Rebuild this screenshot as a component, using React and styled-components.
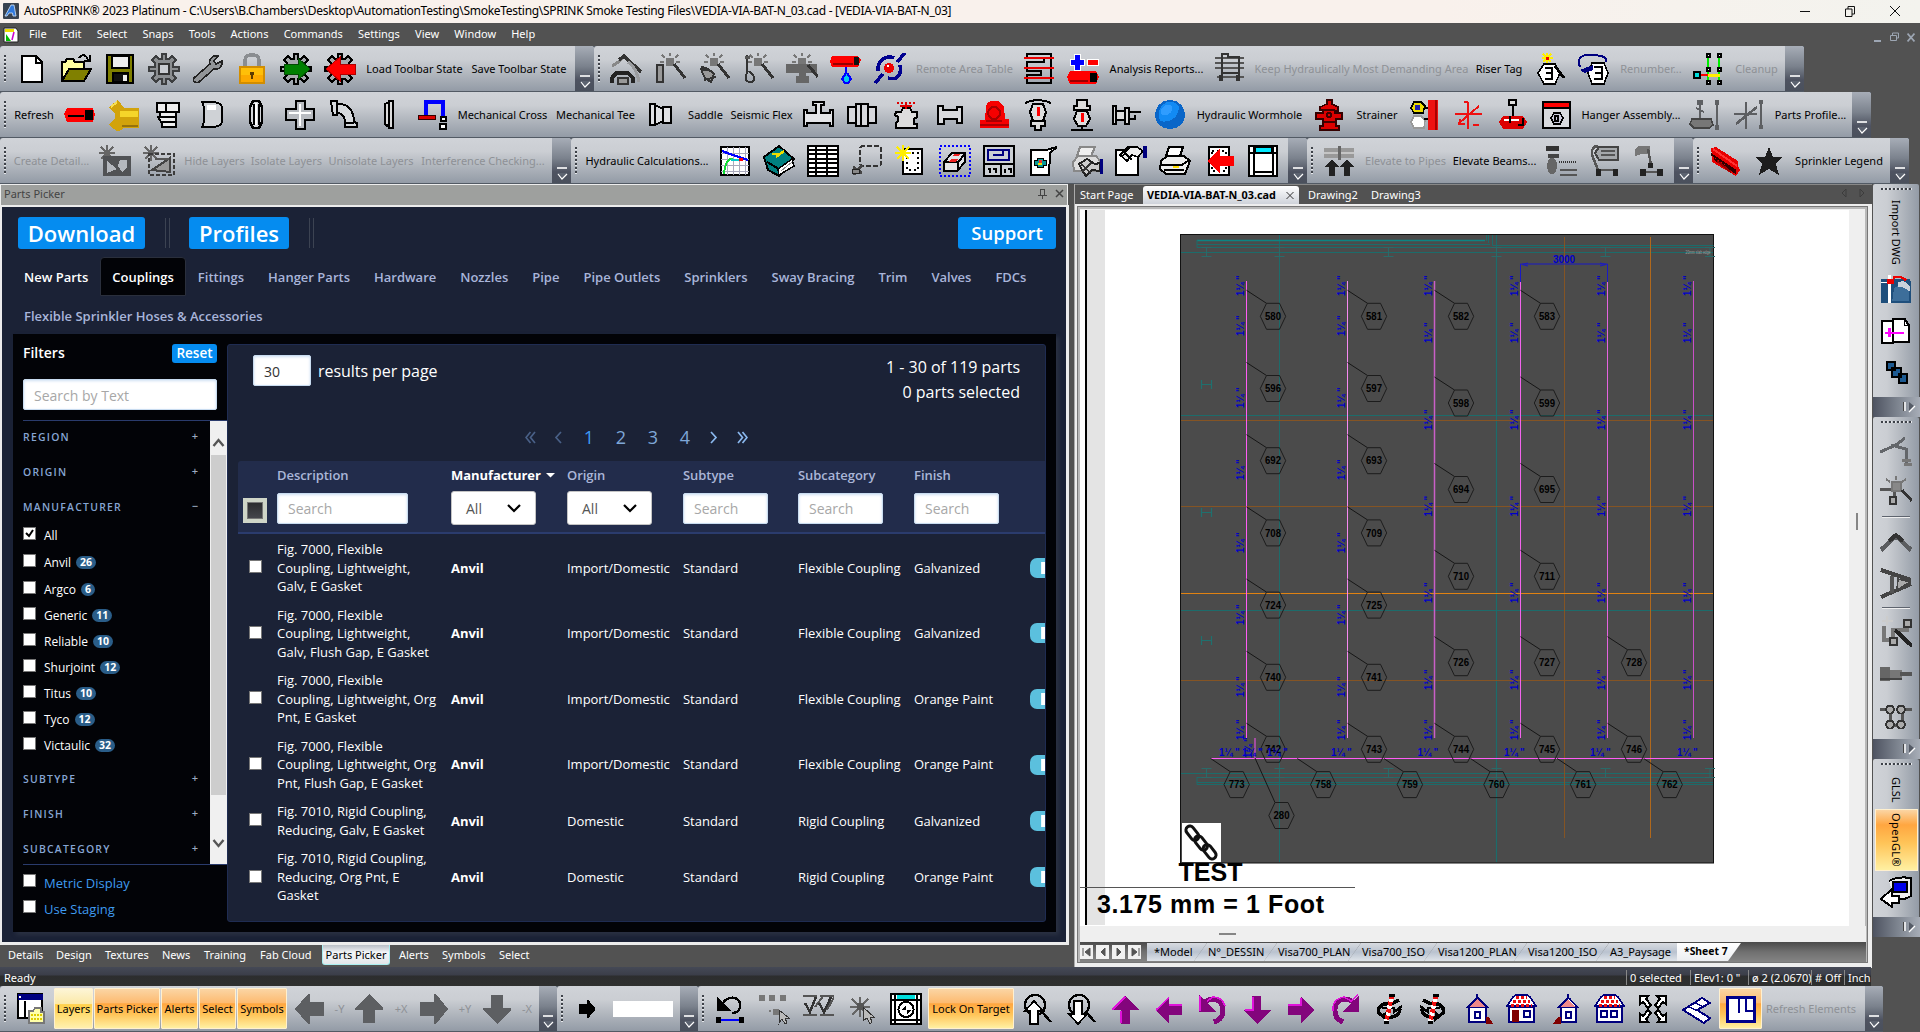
import React from 'react';
import styled, { createGlobalStyle, css } from 'styled-components';

const Global = createGlobalStyle`
  * { box-sizing: border-box; }
  html, body { margin: 0; padding: 0; background: #525252; overflow: hidden; }
  body { font-family: "Noto Sans", "Open Sans", sans-serif; font-size: 11px; color: #000; }
`;

/* ---------- icon data: [path, fill, stroke, strokeWidth, dash] on a 32px grid ---------- */
const K = '#000';
const G = '#5e6063';
const D = '#333';
const N = 'none';
const GEAR = 'M14 1h4v5h3l3-3 4 4-3 3v4h6v4h-6v4l3 3-4 4-3-3h-3v5h-4v-5h-3l-3 3-4-4 3-3v-4H1v-4h6v-4L4 7l4-4 3 3h3z';
const BURST = [['M12 5h8v8h-8z', '#777'], ['M16 0v3M8 2l3 3M24 2l-3 3M6 9h4M22 9h4', N, '#777', 2]];
const WAND = ['M20 11L31 25', N, D, 3];
const GSTAR = ['M8 0v16M0 8h16M2 2l12 12M14 2L2 14', N, '#666', 2];

const ICONS = {
  newFile: [['M6 3h14l6 6v20H6z', '#fff', K, 2], ['M20 3v7h6', N, K, 2]],
  open: [['M2 28V9h3l2-3h6l2 3h9v6', '#ffffa0', K, 2], ['M2 28l7-12h22l-7 12z', '#808000', K, 2], ['M19 5c3-4 7-4 9 2M30 2v6h-6', N, K, 2]],
  save: [['M3 2h26v28H3z', '#808000', K, 2], ['M8 3h17v12H8z', '#eee', K, 1.5], ['M9 20h15v9H9z', '#111', K, 1.5], ['M19 22h4v6h-4z', '#eee']],
  gear: [[GEAR, '#8b8e91', '#3c3e40', 1.6], ['M11 11h10v10H11z', '#c9ccd1', '#333', 2]],
  wrench: [['M2 25l16-14c-2-5 3-9 8-8l-4 5 2 3 6-3c1 6-4 9-8 8L7 29c-3 2-7-1-5-4z', '#929598', '#222', 1.6]],
  lock: [['M9 15V7c0-7 14-7 14 0v8', N, '#8a8d91', 3.5], ['M4 14h24v16H4z', '#ffbf08', '#d28d00', 1.5], ['M5 22h22v7H5z', '#fca900'], ['M14 19h4v3h-1v4h-2v-4h-1z', '#5b3c00']],
  gearGo: [[GEAR, '#a6a9ac', K, 2], ['M4 11h14V5l12 11-12 11v-6H4z', '#008000', '#034a03', 1]],
  gearBack: [[GEAR, '#a6a9ac', K, 2], ['M31 11H16V4L2 16l14 12v-7h15z', '#ff0000', '#b00000', 1]],
  crane: [['M2 13l8-5 4-5', N, '#888', 3], ['M9 7l5-4 17 16', N, D, 3.4], ['M18 9q9 6 11 20', N, '#9a9c9f', 3], ['M2 30v-5l4-5h12l5 5v5', N, '#222', 4], ['M8 25h10v6H8z', '#999', D, 1.6]],
  wandPipe: [...BURST, ['M3 12h6v17H3z', '#999', D, 2], WAND],
  wandBend: [...BURST, ['M4 14l6 2 6 5-3 8-6-4-3-6zM2 16l12 2M6 27l12-3', '#999', D, 2], WAND],
  wandDrop: [...BURST, ['M5 2v18M5 20c-6 11 9 12 7 4-1-3-4-4-5-6', N, D, 2], ['M3 3h5v3H3z', '#555'], WAND],
  wandTee: [...BURST, ['M0 11h31v9H20v3h3v7H10v-7h3v-3H0z', '#666'], ['M22 12l10 12', N, D, 3]],
  pipeDrop: [['M2 3h26l3 4-3 7H2L0 9z', '#f00'], ['M24 4h5v8h-5z', '#111'], ['M3 11h20', N, '#940000', 2], ['M16 14v6l-4 6 3 4h3l3-4-4-6', '#0ce', '#00f', 2]],
  rotatePipe: [['M1 30l8-9M23 9l8-9M4 18C3 6 13 2 20 5M14 25c10 3 14-4 12-13', N, '#000090', 3.5], ['M15 10a5 5 0 1 0 .1 0', '#e00'], ['M13 12h2v2h-2z', '#fff']],
  table: [['M4 1h24v29H4v-8h14v-4H4V9h17V5H4z', N, K, 2], ['M1 5h30M1 15h30M1 25h30', N, '#e90000', 2.3]],
  analysis: [['M7 1h6v5h4v6h-4v5H7v-5H3V6h4z', '#00f', '#fff', 1], ['M20 6h11v6H20z', '#f00', '#fff', 1], ['M3 18h26l3 6-3 7H3l-3-7z', '#f00'], ['M23 20h7v9h-7z', K], ['M3 28h18', N, '#900', 2]],
  ladder: [['M1 5h29M1 10h29M1 15h29M3 24h27', N, '#555', 2], ['M8 28V1h6v3h11v24M8 20h17', N, D, 2.5], ['M5 22h4v6H5zM22 22h4v6h-4z', D]],
  tagNew: [['M11 11h11l5 9-5 11H11l-6-11z', '#fff', K, 1.6], ['M12 15h7v11h-7M13 20h5', N, K, 2.2], ['M14 0v10M9 5h11M10 1l8 8M18 1l-8 8', N, '#fe0', 1.8], ['M13 4h3v3h-3z', '#e00'], ['M22 13l9 12', N, K, 3]],
  tagRenum: [['M15 10h12l4 10-4 11H15l-4-11z', '#fff', K, 1.6], ['M17 14h8v12h-8M18 20h6', N, K, 2.2], ['M3 14C-2 2 10 1 17 2s13 1 12 7', N, '#000080', 2], ['M3 17l13-5v5L8 20z', '#000080']],
  cleanup: [['M15 3v26M26 3v26', N, '#0e0', 2], ['M4 22h12', N, '#f00', 2.5], ['M15 22h12', N, '#fe0', 3], ['M14 1h3v3h-3zM25 1h3v3h-3zM14 15h3v3h-3zM25 15h3v3h-3zM14 28h3v3h-3zM25 28h3v3h-3z', '#fff', K, 1.2], ['M1 19h6v6H1z', '#0dd', K, 1.5]],
  pipe: [['M3 9h26l2 6-2 8H3l-3-8z', '#f00'], ['M21 11h8v10h-8z', K], ['M4 17h16', N, K, 2]],
  yfit: [['M1 8l9-7 6 8h15v20H16l-6 4-9-7 6-7v-4z', '#d2a30b'], ['M12 12h18v6H12z', '#f5d52a'], ['M14 27h16', N, '#96720b', 2], ['M3 8l6-5', N, '#f7df51', 2]],
  cap: [['M5 4h22v9H5zM8 13h16v5H8zM6 18h18v5H9zM10 23h14v5H10z', '#eee', K, 2], ['M14 4v9', N, K, 2]],
  endcap: [['M6 3h12q8 1 8 6v13q0 5-8 6H6l2-5V8z', '#cfd2d6', K, 2], ['M11 6h9v5h-9z', '#fff']],
  coupling: [['M13 2h6l3 6v15l-3 6h-6l-3-6V8z', '#d4d6da', K, 2.4], ['M14 5v21M19 5v21', N, K, 1.5], ['M16 4v22', N, '#fff', 2]],
  cross: [['M12 2h9v8h9v11h-9v9h-9v-9H2V10h10z', '#b9bcc1', K, 2], ['M16 5v22M5 14h22', N, '#fff', 2.4]],
  elbow: [['M3 2h6v3c12-1 17 8 17 18l3 1v4H17v-4C17 18 15 14 9 14v2H5z', '#d7dadd', K, 2], ['M9 5v9M17 24h9', N, K, 1.5]],
  flange: [['M13 5l4-2v25l-4-3zM17 2h4v27h-4z', '#ddd', K, 2.2]],
  uPipe: [['M10 16V3h17v14', N, '#00f', 4], ['M2 16h17v4H2z', '#d00', '#300', 1], ['M25 18h5v4h-5zM24 25h6v5h-6z', '#fff', K, 1.7]],
  saddleA: [['M4 5h5v21H4zM9 6l8 4v12l-8 4zM17 8h8v16h-8z', '#e0e1e4', K, 2]],
  tee: [['M11 3h11v3h-3v8h9v-3h3v16h-3v-3H5v3H2V11h3v3h9V6h-3z', '#e4e5e8', K, 2]],
  sleeve: [['M2 8h8v16H2zM10 5h12v22H10zM22 8h8v16h-8z', '#d7d8dc', K, 2], ['M15 5v22', N, K, 1.4]],
  valveRed: [['M6 13h5l2-4h7l2 4h5v5l-3 2v5h3v4H6v-5l2-2v-4l-3-2z', '#ddd', K, 2], ['M7 4h18', N, '#d00', 2.4, '2 2'], ['M10 7h12', N, '#d00', 2], ['M16 3v7', N, '#d00', 2]],
  nozzle: [['M4 7h5v4h14V8h5v16h-5v-4H10v5H4z', '#d9dadd', K, 2]],
  alarm: [['M9 4l4-2h7l6 5 1 13h4v9H2v-8h5l1-13z', '#f60000'], ['M16 8a6 6 0 1 0 .1 0M2 26h29M8 22h16', N, '#a80000', 2]],
  gaugeA: [['M3 4q13-6 26 0', N, K, 2], ['M11 5h10l3 8-3 9H11L8 13z', '#ddd', K, 2], ['M16 8v9', N, '#f00', 3], ['M9 22h14v5h-4v4h-6v-4H9z', '#ddd', K, 2]],
  gaugeB: [['M11 1h10v6h3v4H8V7h3zM11 12h10l3 8-4 7h-8l-4-7z', '#ddd', K, 2], ['M16 14v9', N, '#f00', 3], ['M5 31h22M16 27v3', N, K, 2]],
  side: [['M3 7h3v18H3zM6 12h9v9H6zM15 9h4v16h-4z', '#ddd', K, 2], ['M19 13h12M19 20h6v-4', N, K, 2]],
  ball: [['M16 1C7 1 1 8 1 16s6 14 15 14 15-6 15-14S25 1 16 1z', '#0a66c8'], ['M13 3C4 6 3 17 6 22c11 3 20-5 19-15-3-4-9-5-12-4z', '#128bf4'], ['M12 6c-5 2-6 7-4 10 7 1 11-3 10-8-1-2-4-3-6-2z', '#2f9dff']],
  hydrant: [['M14 1h5v4l6 3v4h-3v2h7v6h-6v7h3v4H7v-4h3v-7H3v-6h7v-3H7V8l7-3z', '#dd0000', '#350000', 1.5], ['M16 14a2 2 0 1 0 .1 0M10 11h12M11 23h11', N, '#400', 2]],
  riser: [['M19 1h10v30H19z', '#e11'], ['M27 1v30', N, '#a00', 2], ['M5 3h7l4 4-2 7H5L2 9z', '#ed0', K, 1.5], ['M6 6h5v5H6z', '#22a'], ['M5 17h7l4 4-1 8H5l-3-6z', '#fff', '#999', 1.5], ['M15 9h4M15 20h4', N, K, 2]],
  axes: [['M15 3v27M2 15h27M5 25L26 7M7 20v5h5M11 3h4M20 26h6', N, '#e11', 2]],
  hanger: [['M16 6v12', N, K, 2], ['M12 1h7v5h-7z', '#ddd', K, 1.5], ['M6 17h20l4 6-4 7H6l-4-7z', '#d00'], ['M7 21h15', N, '#fff', 2], ['M13 17v7M26 19v7h-5', N, K, 2]],
  cabinet: [['M2 3h27v26H2z', '#d8dade', K, 2], ['M3 4h25v5H3z', '#f00'], ['M2 9h27', N, K, 1.5], ['M13 14h6l3 5-3 6h-6l-3-6z', '#ccd', K, 1.6], ['M14 17h3v5h-3z', N, K, 1.6]],
  brace: [['M11 4v17M28 4v24', N, G, 2.4], ['M8 1h6v5H8zM26 1h4v5h-4zM26 26h4v5h-4z', G], ['M3 20h19l2 6-4 3H5l-4-4z', '#777', '#444', 1.6], ['M7 9l8 4', N, G, 2]],
  brace2: [['M13 3v27M1 15h23M28 2v28M3 25L24 8', N, '#5c5e61', 2.6], ['M26 1h4v4h-4zM26 26h4v4h-4z', G]],
  detail: [GSTAR, ['M4 11h28v20H4z', '#505255'], ['M8 16l10 8-10 4zM21 15h7v7l-5 5-4-6z', '#b4b8be']],
  detail2: [GSTAR, ['M6 9h25v21H6z', N, '#3c3c3c', 2.5, '4 2'], ['M9 25l18-12v14z', '#999', '#444', 2], ['M12 14h14', N, '#555', 2]],
  graph: [['M2 2h28v28H2z', '#fff', K, 2], ['M8 2v28M14 2v28M20 2v28M26 2v28M2 8h28M2 14h28M2 20h28M2 26h28', N, '#aab', 1], ['M3 6l8 3 18 6', N, '#00f', 2.4], ['M5 29c1-9 3-16 9-15', N, '#1d3', 2], ['M12 15h9', N, '#0cc', 2], ['M20 13h4v3h-4z', '#f00']],
  book: [['M1 12L16 1l15 13-15 17L5 25z', '#008080', K, 2], ['M16 30l-1-6 14-10 2 7z', '#fff', K, 1.5], ['M9 9h8l4-3M13 12l8-6', N, '#ed0', 2.3], ['M4 17l12 7', N, K, 2], ['M18 26l11-9', N, '#888', 1]],
  sheet: [['M1 1h30v30H1z', '#fff', K, 2], ['M1 5h30M1 9h30M1 14h30M1 18h30M1 23h30M1 27h30M9 1v30M20 1v30', N, K, 2]],
  area: [['M9 3q1-2 4-2h14q3 0 3 3v14q0 3-3 3H12q-3 0-3-3z', N, '#333', 2, '5 2'], ['M11 20L3 30M2 22l9 6', N, '#444', 3], ['M1 24h7v4H1z', '#888', '#222', 1]],
  newSheet: [['M8 4h19v25H8z', '#fff', K, 2], ['M12 8h11v17H12z', N, K, 2, '2 3'], ['M8 0v16M0 8h16M2 2l12 12M14 2L2 14', N, '#fe0', 2.2]],
  box: [['M1 1h30v30H1z', N, '#00f', 2, '2 2'], ['M5 17l8-9h13v9l-8 9H5z', '#e3e4e6', K, 2], ['M5 17h14l7-8M19 17v9', N, K, 2], ['M9 17l3-3h7l-3 3zM13 11l2-2h7l-3 2z', '#e22']],
  plan: [['M1 1h30v30H1z', '#ccd0d5', K, 2], ['M1 19h30M18 19v12', N, K, 2], ['M5 5h21v10H5zM10 10h10V6', N, '#000080', 2], ['M5 24h2v4M10 24h3v4M22 24v4M25 24h3v4', N, K, 1.5]],
  photo: [['M4 5h15l11-3-7 6-1 22H4z', '#fff', K, 2], ['M10 13h6v2h3v5h-3v2h-6v-2H7v-5h3z', '#0a9898', K, 1], ['M12 15h3v3h-3z', '#e33'], ['M11 19h4', N, '#ed0', 2]],
  printGray: [['M9 2h15l-4 9H6z', '#eee', '#888', 2], ['M2 17l5-6h18l4 5-2 10H3z', '#ddd', '#888', 2], ['M8 19l8-5 8 5 5-1v8l-8-1-6 6-4-6z', '#ccc', '#222', 2], ['M10 19l10 9M20 18l-9 9', N, D, 1.6], ['M30 14v15', N, '#00007d', 3]],
  setup: [['M1 5h22v25H1z', '#fff', K, 2], ['M5 10l8-8h9l6 4-5 6-6-2-5 6z', '#eee', K, 1.8], ['M8 6l9 9M14 3l-7 9', N, K, 1.6], ['M30 1v12', N, '#00007d', 4]],
  print: [['M10 2h14l-4 12H6z', '#fff', K, 2], ['M2 16l6-5h17l6 5-5 13H7l-6-5z', '#eee', K, 2], ['M2 20h21l7-5M5 25h20', N, K, 2], ['M14 22h6', N, '#fd0', 2]],
  book2: [['M6 2h20v28H6z', '#fff', K, 2], ['M9 6h14v20H9z', N, K, 2, '2 3'], ['M31 11H17V3L4 16l13 13v-8h14z', '#f00']],
  window: [['M2 1h28v30H2z', '#fff', K, 2], ['M8 2h16v5H8z', '#00eaff', K, 1], ['M2 8h28M7 1v30M26 1v30M7 27h19', N, K, 1.6], ['M8 9h17v17H8z', '#fff']],
  elevate: [['M1 3h30v10H1z', '#999'], ['M1 8h30', N, '#c5c5c5', 2], ['M16 1v14', N, '#666', 3], ['M9 14l7 8h-4v9H6v-9H2zM24 14l7 8h-4v9h-6v-9h-4z', '#222']],
  layersGray: [['M1 1h13v5H1z', '#333'], ['M3 9h11v4H3z', '#444'], ['M7 13a5 8 0 1 0 .1 0', '#666'], ['M14 17h18', N, '#333', 2, '1 1'], ['M15 25h17M15 30h17', N, '#555', 2.5]],
  pipeGray: [['M10 2h19v13H10L6 8z', '#a5a8ab', '#444', 2], ['M12 6h14M12 10h14', N, '#555', 2], ['M9 1q-7 0-6 9l4 10 2 5h16', N, '#555', 2.5], ['M7 24h5v7H7zM24 24h5v7h-5z', '#222']],
  armGray: [['M5 1h12v8H8l-6 2V4z', '#777'], ['M15 4l3 16M11 27h16', N, '#555', 2.5], ['M15 18h5v5h-5zM7 24h6v7H7zM24 24h6v7h-6z', '#222']],
  beamRed: [['M2 3l5-1 22 14v5l2 4-4 6L3 17v-7z', '#e80000'], ['M2 9l25 17M5 14l22 14', N, '#300', 2], ['M4 4l24 17', N, '#f33', 2], ['M8 16l14 11', N, '#900', 2]],
  star: [['M16 2l4 10h9l-6 7 3 11-10-6-10 6 3-11-6-7h9z', '#1d1d1d']],
  pane: [['M2 1h24v24H2z', '#fff', K, 2], ['M2 1h25v6H2z', '#000080'], ['M9 8v17', N, K, 2], ['M3 3h2v2H3z', '#fff'], ['M13 18h4l2-3h6v4h3v11H13z', '#ffffa8', '#777', 1.5], ['M15 22h11M15 26h11', N, '#dc0', 2, '2 1']],
  aL: [['M1 16L14 1h2v8h14v14H16v8h-2z', '#5d5f62']],
  aU: [['M16 1l14 14v2h-8v13H10V17H2v-2z', '#5d5f62']],
  aR: [['M31 16L19 1h-2v8H3v14h14v8h2z', '#5d5f62']],
  aD: [['M16 31L2 17v-2h8V2h12v13h8v2z', '#5d5f62']],
  aSmall: [['M4 9h12V3h2l10 12v2L18 29h-2v-6H4z', '#000']],
  undo: [['M8 12C12 1 28 3 26 14c-1 5-4 6-8 6', N, K, 2.4], ['M3 4v14h14z', K], ['M4 27h24', N, '#00f', 2.4], ['M2 24h5v6H2zM25 24h5v6h-5z', K]],
  pick: [['M1 2h6v6H1zM11 2h6v6h-6zM22 2h6v6h-6z', '#777'], ['M15 16h6v6h-6zM11 17h2v2h-2z', '#777'], ['M21 17v13l3-4 3 5 2-1-2-5h4z', '#bbb', '#333', 1]],
  checks: [['M1 3h14M18 3h14M1 22h14M18 22h14M13 14L22 2M25 17L32 4', N, '#555', 2], ['M3 10l5 9 6-15M17 10l5 9 7-15', N, '#333', 2.4]],
  sparkPick: [['M14 4v20M4 14h20M6 6l16 16M22 6L6 22', N, '#666', 2.8], ['M11 10h7v7h-7z', '#555'], ['M17 14v14l4-3 3 6 2-2-2-5h4z', '#bbb', '#333', 1]],
  film: [['M1 1h30v30H1z', '#fff', K, 2], ['M7 2h18v4H7z', '#0dd'], ['M1 7h30M1 27h30M5 1v30M27 1v30', N, K, 1.7], ['M16 9a7.500 7.500 0 1 0 .1 0', '#fff', K, 2], ['M16 12v5h-4zM17 17h4l-4 5z', K]],
  zoomIn: [['M14 2a10 10 0 1 0 .1 0M21 19l9 10', N, K, 2.4], ['M13 8l9 10h-5v13H9V18H4z', '#fff', K, 1.8]],
  zoomOut: [['M14 2a10 10 0 1 0 .1 0M21 19l9 10', N, K, 2.4], ['M13 31l9-10h-5V8H9v13H4z', '#fff', K, 1.8]],
  mU: [['M16 3L30 17h-9v14h-9V17H2z', '#83057c'], ['M3 17L16 4M12 18v12', N, '#e012da', 1.5]],
  mL: [['M2 17L16 4v7h13v11H16v8z', '#83057c'], ['M3 17L16 5M16 12h13', N, '#e012da', 1.5]],
  mD: [['M16 31L2 17h9V3h9v14h10z', '#83057c'], ['M12 4v13H4', N, '#e012da', 1.5]],
  mR: [['M30 17L16 4v7H3v11h13v8z', '#83057c'], ['M3 12h13V5', N, '#e012da', 1.5]],
  mUndo: [['M8 9c8-6 18-2 18 9 0 5-3 9-9 11', N, '#83057c', 5], ['M2 2v17h17z', '#83057c'], ['M3 3v15M10 8l6-4q9 0 12 9', N, '#e012da', 1.5]],
  mRedo: [['M24 9C16 3 5 7 6 18c0 5 3 9 8 11', N, '#83057c', 5], ['M30 2v17H13z', '#83057c'], ['M4 18q-1-12 11-14l7 4 7-6', N, '#e012da', 1.5]],
  rotA: [['M26 7q-8 5-15 4-7 3-5 9 8 7 16 3 5-2 5-7', N, K, 3.4], ['M9 15h12v4l8-6', N, K, 2.4], ['M14 18l-7 5 8 6z', K], ['M19 2L13 30', N, '#fff', 4.5], ['M19 2L13 30', N, '#e11', 4.5, '4 3'], ['M16 1h6v3h-6zM11 28h5v3h-5z', K]],
  rotB: [['M6 7q8 5 15 4 7 3 5 9-8 7-16 3-5-2-5-7', N, K, 3.4], ['M23 15H11v4l-8-6', N, K, 2.4], ['M18 18l7 5-8 6z', K], ['M19 2L13 30', N, '#fff', 4.5], ['M19 2L13 30', N, '#e11', 4.5, '4 3'], ['M16 1h6v3h-6zM11 28h5v3h-5z', K]],
  houseA: [['M8 14h17v15H8z', '#fff', '#00007d', 2.2], ['M16 1v4L7 14h19L17 5', '#fff', '#00007d', 1.6], ['M16 6l-7 8h15z', '#e88'], ['M14 19h5v6h-5z', N, '#00007d', 1.8], ['M25 24h3l4 7h-7z', '#800000']],
  houseB: [['M4 14h25v15H4z', '#fff', '#00007d', 2.2], ['M2 13l6-9 3-2h11l3 2 6 9z', '#fff', '#00007d', 1.5], ['M6 12h21M8 8h17M11 4h11', N, '#e11', 3, '3 2'], ['M7 17h7v12H7z', '#800000'], ['M19 18h6v6h-6z', N, '#00007d', 1.8]],
  houseC: [['M12 14h15v15H12z', '#fff', '#00007d', 2.2], ['M19 1v4l-9 9h18L20 5', '#fff', '#00007d', 1.6], ['M19 6l-7 8h14z', '#e88'], ['M17 19h5v6h-5z', N, '#00007d', 1.8], ['M12 24H9l-5 7h8z', '#800000']],
  houseD: [['M4 14h25v15H4z', '#fff', '#00007d', 2.2], ['M2 13l6-9 3-2h11l3 2 6 9z', '#fff', '#00007d', 1.5], ['M6 12h21M8 8h17M11 4h11', N, '#e11', 3, '3 2'], ['M8 18h6v6H8zM18 18h6v6h-6z', N, '#00007d', 1.8]],
  expand: [['M3 3h8l-2 3 5 6-3 3-5-6-3 2zM29 3v8l-3-2-5 6-3-3 5-6-3-3zM3 29v-8l3 2 5-6 3 3-5 6 2 3zM29 29h-8l2-3-5-6 3-3 5 6 3-2z', '#fff', K, 2]],
  wedge: [['M2 17L21 5l8 5-13 7 13 8-6 5z', '#fff', '#00007d', 2], ['M8 14l7 3M14 10l7 3', N, '#00007d', 1.4]],
  planBlue: [['M2 4h28v25H2z', '#fff', '#00008a', 3], ['M14 5v15M21 5v13h8', N, '#00008a', 2.5]],
  dwg: [['M0 5h30l2 3v23H0z', '#1f4f7c'], ['M14 15q8-5 16 1v13H12z', '#3d6e9a'], ['M9 1v30', N, '#fff', 3], ['M0 9h14', N, '#fff', 2], ['M6 5h8v6H6z', '#e00'], ['M13 4q8-3 14 3', N, '#e00', 2.5], ['M18 9q8-4 13 5v5q-7-6-13-5z', '#cbd2dc']],
  compare: [['M1 5h12v24H1z', '#fff', K, 2.4], ['M13 3h12l5 7v18H13z', '#fff', K, 2.4], ['M25 3v7h5', N, K, 1.6], ['M4 18h20M9 13v9', N, '#f0f', 2.3]],
  blocks: [['M6 4h9v9H6zM12 11h9v9h-9zM19 17h9v10h-9z', '#1d5a91', K, 2]],
  sideA: [['M0 18L16 11 25 4M11 11l15 4v14', N, '#63666a', 3], ['M22 26h9M24 30h8', N, '#777', 3]],
  sideB: [['M0 13h14v9', N, '#555', 3], ['M12 6h9v9h-9zM16 0v4M6 3l4 3M26 3l-4 3', '#888', '#777', 2], ['M10 21h6v7h-6z', '#aaa', '#333', 2], ['M22 14l10 11', N, D, 3]],
  sideC: [['M1 25L16 11l15 14', N, '#5b5d60', 4.5], ['M9 16l7-6 7 6', N, D, 4]],
  sideD: [['M1 3l30 10M31 17L1 30', N, '#444', 4], ['M12 9v17', N, '#555', 4], ['M18 12l12 3-13 8z', '#aaa', '#444', 1.6]],
  sideE: [['M4 10v14h9M13 24V14h14V8', N, '#777', 3.4], ['M7 0v9M2 5h11', N, '#ccc', 2], ['M15 14l17 16', N, '#222', 4], ['M24 4h7v7h-7zM10 22h7v7h-7z', '#aaa', D, 1.5]],
  sideF: [['M0 9h10v14H0z', '#666'], ['M10 12h12v8H10z', '#777'], ['M0 21h22', N, '#444', 2], ['M20 16h12', N, '#555', 4]],
  sideG: [['M0 9h10M22 9h10M10 10v14M22 10v14M8 25h16', N, '#555', 3], ['M8 6a4 4 0 1 0 4 0zM19 6a4 4 0 1 0 4 0zM8 21a4 4 0 1 0 4 0zM19 21a4 4 0 1 0 4 0z', '#aaa', D, 1.7]],
  monitor: [['M9 5q8-5 22-3v18q-8 5-16 3', '#eee', K, 2], ['M13 6h14v10H13z', '#0000e8', K, 1.5], ['M12 13v7h7v7h-7v4L1 23z', '#fff', K, 2]],
};

const Svg = styled.svg`display: block; flex: none;`;
const Icon = ({ name, size = 32 }) => (
  <Svg width={size} height={size} viewBox="0 0 32 32">
    {ICONS[name].map(([d, f, s, w, dash], i) => (
      <path key={i} d={d} fill={f} stroke={s || 'none'} strokeWidth={w || 0} strokeDasharray={dash} shapeRendering="crispEdges" />
    ))}
  </Svg>
);

/* ---------- frame ---------- */
const Frame = styled.div`
  width: 1920px; height: 1032px; display: flex; flex-direction: column;
  background: #525252; overflow: hidden; white-space: nowrap;
`;
const TitleBar = styled.header`
  height: 23px; flex: none; display: flex; align-items: center; padding: 0 20px 1px 3px;
  background: linear-gradient(90deg, #f9f1ec 0 75%, #f3f3ee);
`;
const TitleText = styled.h1`
  margin: 0 auto 0 5px; font: 400 12px/22px "Noto Sans", sans-serif; letter-spacing: -0.28px;
`;
const WinButtons = styled.div`display: flex; align-items: center; gap: ${p => p.$gap}px;`;
const MenuBar = styled.nav`
  height: 23px; flex: none; display: flex; align-items: center; padding: 0 5px 0 3px;
  background: #525252; color: #fff;
`;
const MenuItem = styled.span`margin-left: ${p => (p.$first ? 10 : 15.2)}px; line-height: 20px; height: 22px;`;
const Spacer = styled.div`flex: 1;`;

/* ---------- toolbars ---------- */
const Row = styled.div`height: 46px; flex: none; display: flex; background: #525a64; padding-bottom: 1px; width: fit-content;`;
const Bar = styled.div`
  display: flex; align-items: stretch; height: 45px; width: ${p => p.$w}px; border-radius: 3px 3px 0 0;
  background: linear-gradient(#d0d3d8 0, #cbced3 30%, #b4b9c0 58%, #939ba6 100%);
`;
const Grip = styled.i`
  width: 2px; height: 27px; margin: 9px 4px 0 4px; flex: none;
  background: repeating-linear-gradient(#3d4148 0 2px, #e6e8eb 2px 3px, transparent 3px 4px);
`;
const Slot = styled.div`
  width: ${p => p.$w}px; flex: none; display: flex; align-items: center; justify-content: center;
  color: ${p => (p.$off ? '#8e9196' : '#000')};
`;
const Cap = styled.div`
  width: ${p => p.$w || 19}px; flex: none; height: 45px; margin-left: auto; display: flex; align-items: flex-end; justify-content: center;
  background: linear-gradient(#a7adb7, #7b828d 45%, #4e5361 75%, #4a505c); border-radius: 0 3px 0 0;
`;
const CapMark = () => (
  <Svg width="12" height="17" viewBox="0 0 12 17">
    <path d="M1 2h10" stroke="#fff" strokeWidth="1.6" />
    <path d="M1 7h10L6 13z" fill="#5c6370" /><path d="M2 8l4 5 5-5" fill="none" stroke="#fff" strokeWidth="1.2" />
  </Svg>
);
const HotButton = styled.div`
  width: ${p => p.$w}px; height: 41px; align-self: center; flex: none; display: flex; align-items: center; justify-content: center;
  margin-right: 1px; border: 1px solid #fff0cf; border-radius: 1px;
  background: ${p => (p.$pale
    ? 'linear-gradient(#fdf5d6, #fbe9a9 38%, #ffd04a 40%, #fff0ae)'
    : 'linear-gradient(#fbd5a4, #fdbb71 35%, #ffa640 38%, #ffc458 65%, #fff0a2)')};
`;
const TextBox = styled.div`width: 60px; height: 16px; background: #fff; align-self: center; margin: 0 3px 0 7px;`;

// item forms: 'icon' (44px) | [text, width, disabled?] | {hot, w, pale} | {icon, w} | {box}
const Items = ({ items }) => items.map((it, i) => {
  if (typeof it === 'string') return <Slot key={i} $w={44}><Icon name={it} /></Slot>;
  if (Array.isArray(it)) return <Slot key={i} $w={it[1]} $off={it[2]}>{it[0]}</Slot>;
  if (it.box) return <TextBox key={i} />;
  if (it.hot) return <HotButton key={i} $w={it.w} $pale={it.pale}>{ICONS[it.hot] ? <Icon name={it.hot} size={30} /> : it.hot}</HotButton>;
  return <Slot key={i} $w={it.w}><Icon name={it.icon} size={it.size} /></Slot>;
});
const ToolBar = ({ w, cap, items }) => (
  <Bar $w={w}><Grip /><Items items={items} /><Cap $w={cap}><CapMark /></Cap></Bar>
);

const row1 = [
  { w: 594, items: ['newFile', 'open', 'save', 'gear', 'wrench', 'lock', 'gearGo', 'gearBack', ['Load Toolbar State', 105], ['Save Toolbar State', 104]] },
  { w: 1210, items: ['crane', 'wandPipe', 'wandBend', 'wandDrop', 'wandTee', 'pipeDrop', 'rotatePipe', ['Remote Area Table', 105, 1], 'table', 'analysis', ['Analysis Reports...', 103], 'ladder', ['Keep Hydraulically Most Demanding Area', 219, 1], ['Riser Tag', 56], 'tagNew', 'tagRenum', ['Renumber...', 72, 1], 'cleanup', ['Cleanup', 51, 1]] },
];
const row2 = [
  { w: 1871, items: [['Refresh', 48], 'pipe', 'yfit', 'cap', 'endcap', 'coupling', 'cross', 'elbow', 'flange', 'uPipe', ['Mechanical Cross', 97], ['Mechanical Tee', 89], 'saddleA', ['Saddle', 43], ['Seismic Flex', 69], 'tee', 'sleeve', 'valveRed', 'nozzle', 'alarm', 'gaugeA', 'gaugeB', 'side', 'ball', ['Hydraulic Wormhole', 115], 'hydrant', ['Strainer', 52], 'riser', 'axes', 'hanger', 'cabinet', ['Hanger Assembly...', 104], 'brace', 'brace2', ['Parts Profile...', 79]] },
];
const row3 = [
  { w: 571, items: [['Create Detail...', 83, 1], 'detail', 'detail2', ['Hide Layers', 67, 1], ['Isolate Layers', 77, 1], ['Unisolate Layers', 92, 1], ['Interference Checking...', 132, 1]] },
  { w: 736, items: [['Hydraulic Calculations...', 132], 'graph', 'book', 'sheet', 'area', 'newSheet', 'box', 'plan', 'photo', 'printGray', 'setup', 'print', 'book2', 'window'] },
  { w: 386, items: ['elevate', ['Elevate to Pipes', 89, 1], ['Elevate Beams...', 89], 'layersGray', 'pipeGray', 'armGray'] },
  { w: 216, items: ['beamRed', 'star', ['Sprinkler Legend', 96]] },
];
const bottomRow = [
  { w: 557, cap: 18, items: ['pane', { hot: 'Layers', w: 39, pale: 1 }, { hot: 'Parts Picker', w: 66 }, { hot: 'Alerts', w: 37 }, { hot: 'Select', w: 37 }, { hot: 'Symbols', w: 50 }, 'aL', ['-Y', 15, 1], 'aU', ['+X', 20, 1], 'aR', ['+Y', 20, 1], 'aD', ['-X', 16, 1]] },
  { w: 141, cap: 18, items: [{ icon: 'aSmall', w: 39, size: 22 }, { box: 1 }] },
  { w: 1185, cap: 18, items: ['undo', 'pick', 'checks', 'sparkPick', 'film', { hot: 'Lock On Target', w: 86 }, 'zoomIn', 'zoomOut', 'mU', 'mL', 'mUndo', 'mD', 'mR', 'mRedo', 'rotA', 'rotB', 'houseA', 'houseB', 'houseC', 'houseD', 'expand', 'wedge', { hot: 'planBlue', w: 43 }, ['Refresh Elements', 96, 1]] },
];

/* ---------- main split ---------- */
const Main = styled.main`height: 783px; flex: none; display: flex;`;
const PickerPane = styled.section`width: 1069px; flex: none; display: flex; flex-direction: column;`;
const PaneTitle = styled.div`
  height: 21px; margin-right: 1px; display: flex; align-items: center; gap: 8px; padding: 0 3px 3px 3px;
  border: 1px solid #eee; border-bottom: 0; background: #9ea09e; color: #444;
`;
const Web = styled.div`
  height: 740px; border: solid #ececec; border-width: 2px 3px 3px 2px; background: #1b2236; color: #fff;
  font-family: "Open Sans", "Noto Sans", sans-serif; padding: 10px 10px 0 11px; display: flex; flex-direction: column;
  white-space: nowrap; overflow: hidden;
`;
const TopActions = styled.div`display: flex; height: 32px; padding-left: 5px; flex: none;`;
const Blue = styled.button`
  border: 0; border-radius: 3px; background: #058cf0; color: #fff; padding: 0; font-family: inherit; font-weight: 600;
  width: ${p => p.$w}px; height: ${p => p.$h}px; font-size: ${p => p.$fs}px; line-height: ${p => p.$h}px; margin-left: ${p => p.$ml || 0};
`;
const Bars = styled.i`width: 5px; height: 30px; margin: 1px 19px 0 20px; border: solid #3c4352; border-width: 0 1px;`;
const Tabs = styled.div`display: flex; flex-wrap: wrap; margin-top: 8px; height: 78px; flex: none;`;
const Tab = styled.span`
  height: 39px; line-height: 39px; padding: 0 11px; border: 1px solid transparent; font-size: 13px; font-weight: 600;
  color: ${p => (p.$on ? '#fff' : '#a9b5da')};
  &:first-child, &:last-child { padding-left: 10px; }
  ${p => p.$active && css`background: #020307; border-color: #2a2f3c; border-radius: 4px 4px 0 0;`}
`;
const Panel = styled.div`
  margin: -1px 0 0 0; width: 1043px; height: 598px; background: #020307; display: flex; padding: 10px;
  box-shadow: 3px 3px 4px #2a3142;
`;
const Filters = styled.aside`width: 204px; flex: none; display: flex; flex-direction: column;`;
const FilterHead = styled.div`display: flex; justify-content: space-between; height: 35px; padding-right: 10px; font-size: 14px; font-weight: 600; line-height: 18px;`;
const Field = styled.div`
  height: 31px; width: ${p => p.$w}px; background: #fff; border: 1px solid #c9dcf0; border-radius: 2px; padding-left: 10px;
  color: ${p => p.$c || '#a7a7a7'}; font-size: 14px; line-height: ${p => p.$lh || 29}px; box-shadow: inset 0 1px 3px #cfe0f3; flex: none;
`;
const ListWrap = styled.div`margin-top: 10px; height: 445px; border: solid #2a3b6c; border-width: 1px 0; display: flex; flex: none;`;
const List = styled.div`width: 187px; overflow: hidden;`;
const Group = styled.div`
  height: 35px; padding: 0 12px 0 0; display: flex; justify-content: space-between; align-items: center; margin-top: ${p => p.$mt || 0}px;
  font-size: 10.4px; font-weight: 600; letter-spacing: 1.25px; color: #86a5d3;
  span:last-child { color: #9aaac0; letter-spacing: 0; font-size: 11px; padding-bottom: 4px; }
`;
const Check = styled.i`
  width: 13px; height: 13px; flex: none; background: #fff; border: 1px solid #777; display: inline-flex; align-items: center; justify-content: center;
`;
const Opt = styled.div`
  height: 26.15px; display: flex; align-items: center; font-size: ${p => p.$fs || 12}px; color: ${p => p.$c || '#fff'};
  margin: ${p => (p.$first ? '-2px 0 1px' : 0)};
  ${Check} { margin: -4px 8px 0 0; }
`;
const Links = styled.div`margin-top: 5px;`;
const Count = styled.b`margin-left: 5px; height: 13px; padding: 0 4px; border-radius: 7px; background: #2a5d88; font-size: 10.5px; line-height: 13px;`;
const Scroll = styled.div`width: 17px; background: #f0f0f0; display: flex; flex-direction: column; align-items: center;`;
const Thumb = styled.i`width: 15px; height: 340px; background: #cdcdcd; margin-top: 8px;`;
const Card = styled.div`
  width: 819px; height: 578px; flex: none; border: 1px solid #1f2c52; border-radius: 3px; background: #1b2236;
  display: flex; flex-direction: column; padding-left: 10px; overflow: hidden;
`;
const Summary = styled.div`height: 73px; display: flex; padding: 10px 25px 0 15px; font-size: 16px; flex: none;`;
const PerPage = styled.span`line-height: 33px; margin: 0 auto 0 7px; letter-spacing: -0.05px;`;
const Totals = styled.div`line-height: 25px; text-align: right; letter-spacing: -0.02px;`;
const Pager = styled.div`height: 43px; padding-left: 278px; display: flex; align-items: center; font-size: 18px; flex: none;`;
const PageNo = styled.span`
  width: ${p => p.$w || 32}px; color: ${p => p.$c || '#7fa7d8'}; height: 27px; line-height: 21px; display: flex; justify-content: center; align-items: center;
  padding-bottom: 5px;
`;
const cols = css`display: grid; grid-template-columns: 39px 174px 116px 116px 115px 116px 116px 16px;`;
const THead = styled.div`
  ${cols} height: 73px; flex: none; background: #222c4b; border-bottom: 2px solid #2b3c6e; border-radius: 3px 0 0 0; margin-bottom: 1px;
  font-size: 13px; font-weight: 600; color: #aab6d8; align-content: start;
`;
const TH = styled.div`display: flex; flex-direction: column; padding-top: 5px; color: ${p => (p.$on ? '#fff' : 'inherit')}; font-weight: ${p => (p.$on ? 700 : 600)};
  ${Field} { margin-top: 9px; font-weight: 400; } `;
const THLabel = styled.div`display: flex; align-items: center; gap: 5px; height: 18px; line-height: 18px; letter-spacing: -0.05px;`;
const SelectBox = styled.div`
  width: 85px; height: 34px; margin-top: 7px; background: #fff; border: 1px solid #c4c4c4; border-radius: 3px; display: flex; align-items: center;
  justify-content: space-between; padding: 0 14px; color: #555; font-size: 14px; font-weight: 400;
`;
const BigCheck = styled.i`
  width: 24px; height: 25px; margin: 37px 0 0 5px; border: 4px solid #cfd5c8; background: linear-gradient(#2b2b2e, #46474d); box-shadow: inset 0 0 0 1px #777;
`;
const TR = styled.div`${cols} height: ${p => (p.$lines === 2 ? 47 : 65.6)}px; flex: none; align-items: center; font-size: 13px; letter-spacing: -0.02px; line-height: 18.57px; ${Check} { margin: -2px 0 0 11px; }`;
const Desc = styled.span`white-space: pre-line; line-height: 18.57px;`;
const Info = styled.i`
  height: 20px; width: 40px; background: #5bc0de; border-radius: 7px; display: flex; align-items: center; padding-left: 11px;
  &::before { content: ''; width: 12px; height: 12px; background: #fff; border-left: 1px solid #e8fbff; }
`;

const BottomTabs = styled.div`height: 22px; display: flex; padding-left: 8px; color: #fff; line-height: 20px;`;
const BTab = styled.span`
  width: ${p => p.$w}px; flex: none; height: 20px;
  ${p => p.$active && css`background: linear-gradient(#b9bec6, #f4f6f8 40%, #e2e5e9); color: #000; text-align: center; border: 1px solid #a9eef0; border-top: 0; border-radius: 0 0 3px 3px; margin: 0 9px 0 -5px; `}
`;

/* ---------- document ---------- */
const DocPane = styled.section`width: 798px; margin-left: 5px; flex: none; display: flex; flex-direction: column; border-left: 1px solid #aaa; `;
const DocTabs = styled.div`height: 20px; display: flex; color: #fff; padding-left: 5px; line-height: 21px; border-top: 1px solid #888; background: #525252; align-items: flex-end;`;
const DocTab = styled.span`
  height: 20px; width: ${p => p.$w}px; flex: none;
  ${p => p.$active && css`display: flex; justify-content: space-between; padding: 0 5px 0 4px; margin: 0 9px 0 0; height: 18px; line-height: 18px; background: linear-gradient(#fff, #e6e8ec 50%, #cfd3da); color: #000; font-weight: 700; font-size: 10.8px; border-radius: 3px 3px 0 0;`}
`;
const DocBody = styled.div`
  flex: 1; border: solid #eee; border-width: 2px 4px 5px 2px; box-shadow: inset 0 0 0 1px #777, inset 0 0 0 3px #b9b9b9; padding: 4px 2px 1px 3px;
  background: #efefef; display: flex; flex-direction: column;
`;
const CanvasRow = styled.div`height: 716px; display: flex;`;
const VScroll = styled.div`width: 16px; display: flex; align-items: center; justify-content: center; background: #efefef; i { width: 2px; height: 17px; background: #858585; margin-top: -94px; }`;
const HScroll = styled.div`height: 16px; display: flex; align-items: center; background: #efefef; i { width: 17px; height: 2px; background: #858585; margin-left: 139px; }`;
const Sheets = styled.div`height: 20px; display: flex; align-items: center; background: linear-gradient(#4a4a4a, #707070 50%, #848484); `;
const NavBtn = styled.i`width: 13px; height: 14px; margin-right: 3px; background: #f1f1f1; display: flex; align-items: center; justify-content: center;`;
const SheetList = styled.div`display: flex; margin-left: 3px;`;
const Sheet = styled.span`
  height: 18px; flex: none; width: ${p => p.$w}px; padding-left: ${p => (p.$first || p.$active ? 7 : 14)}px; line-height: 17px;
  margin-left: ${p => (p.$first ? 0 : p.$active ? -5 : -13)}px;
  background: ${p => (p.$active ? 'linear-gradient(#fff, #eceef1)' : 'linear-gradient(#d8dbe0, #b9c2cf 50%, #dfe4ea)')};
  clip-path: polygon(${p => (p.$active || p.$first ? '0' : '13px')} 0, 100% 0, calc(100% - ${p => (p.$last ? 5 : 13)}px) 100%, 0 100%);
  font-weight: ${p => (p.$active ? 700 : 400)}; font-size: ${p => (p.$active ? 10.4 : 11)}px;
`;

/* ---------- side column ---------- */
const Side = styled.aside`width: 47px; margin-left: 1px; display: flex; flex-direction: column;`;
const VBar = styled.div`
  width: 46px; height: ${p => p.$h}px; flex: none; display: flex; flex-direction: column; align-items: center; border-radius: 2px;
  background: linear-gradient(90deg, #d0d3d8 0, #cbced3 30%, #b4b9c0 60%, #939ba6);
`;
const VGrip = styled.i`width: 31px; height: 2px; margin: 4px 0 6px; flex: none; background: repeating-linear-gradient(90deg, #3d4148 0 2px, #e6e8eb 2px 3px, transparent 3px 4px);`;
const VSlot = styled.div`height: ${p => p.$h || 42}px; flex: none; display: flex; align-items: center; justify-content: center;`;
const VText = styled.div`writing-mode: vertical-rl; height: ${p => p.$h}px; flex: none; text-align: center; line-height: 16px;`;
const VHot = styled.div`
  writing-mode: vertical-rl; width: 43px; height: 62px; flex: none; display: flex; align-items: center; justify-content: center; border: 1px solid #fff0cf;
  background: linear-gradient(#fbd5a4, #ffa640 25%, #ffc458 55%, #fff0a2); letter-spacing: 0.4px; text-orientation: sideways;
`;
const VLine = styled.i`width: 28px; height: 1px; margin: 3px 0; background: #5e646e; box-shadow: 0 1px #eee; flex: none;`;
const VCap = styled.div`
  margin-top: auto; width: 47px; height: 20px; display: flex; align-items: center; justify-content: flex-end; padding-right: 3px;
  background: linear-gradient(90deg, #4e5361, #7b828d 50%, #a7adb7);
`;
const VMark = () => (
  <VCap><Svg width="15" height="12" viewBox="0 0 15 12"><path d="M3 1v9" stroke="#fff" strokeWidth="1.5" /><path d="M1.5 1v9" stroke="#444" strokeWidth="1" /><path d="M7 1v9l5-5z" fill="#555b66" /><path d="M7 11l6-6" stroke="#fff" strokeWidth="1.2" /></Svg></VCap>
);

const Status = styled.footer`
  width: 1871px; height: 19px; flex: none; display: flex; align-items: center; color: #fff; padding: 1px 0 0 4px;
  background: linear-gradient(#454956, #3b3e49 8px, #2c2d2e 9px, #2f302f);
`;
const Cell = styled.span`height: 15px; line-height: 15px; width: ${p => p.$w}px; padding-left: 3px; margin-left: ${p => p.$ml || 0}px; border-left: 1px solid #888; flex: none;`;

/* ---------- drawing ---------- */
const PIPES = [1246.5, 1347.5, 1434.5, 1520.5, 1607.5, 1693.5];
const A = [316.3, 388.5, 460.7, 532.9, 605.1, 677.3, 749.3];
const B = [316.3, 403, 489.5, 576.3, 662.7, 749.3];
const TAGS = [
  [A, [580, 596, 692, 708, 724, 740, 742]], [A, [581, 597, 693, 709, 725, 741, 743]],
  [B, [582, 598, 694, 710, 726, 744]], [B, [583, 599, 695, 711, 727, 745]], [B.slice(4), [728, 746]],
];
const LY_A = [286, 326, 398, 470, 543, 615, 687, 730];
const LY_B = [286, 333, 420, 506.5, 593, 680, 730];

const Tag = ({ x, y, n, from }) => (
  <g>
    <path d={`M${from[0]} ${from[1]}L${x - 6.5} ${y - 13}`} stroke="#161616" fill="none" />
    <path d={`M${x - 6.5} ${y - 13}h13l6.2 13l-6.2 13h-13l-6.2-13z`} stroke="#1c1c1c" fill="none" />
    <text x={x} y={y + 3.7} fontSize="10" textAnchor="middle" fill="#000" fontWeight="700" textLength="16" lengthAdjust="spacingAndGlyphs">{n}</text>
  </g>
);
const Size = ({ x, y, flat }) => (
  <g transform={`translate(${x} ${y})${flat ? '' : ' rotate(-90)'}`} fill="#0000c8" fontSize="10" fontWeight="700">
    <text x="-10" y="0" textLength="13.500" lengthAdjust="spacingAndGlyphs">1¼</text>
    <text x="6" y="0">"</text>
  </g>
);
const IBeam = ({ x, y }) => <path d={`M${x - 5} ${y - 4.5}h10M${x} ${y - 4.5}v9M${x - 5} ${y + 4.5}h10`} stroke="#2a6a69" fill="none" />;
const HBeam = ({ x, y }) => <path d={`M${x - 5} ${y - 4.5}v9M${x - 5} ${y}h10M${x + 5} ${y - 4.5}v9`} stroke="#1f706e" strokeWidth="1.2" fill="none" />;

const Drawing = () => (
  <Svg width="769" height="716" viewBox="1080 210 769 716" fontFamily='"Liberation Sans", sans-serif'>
    <rect x="1080" y="210" width="769" height="716" fill="#fff" />
    <rect x="1087" y="210" width="18" height="715" fill="#e4e4e4" />
    <rect x="1085" y="210" width="2" height="715" fill="#000" />
    <rect x="1180.5" y="234.5" width="533" height="628.5" fill="#4b4b4b" stroke="#111" />
    <g stroke="#1c6c6b" fill="none">
      <path d="M1279.5 235v627M1181 252.5h532M1181 415.5h532M1181 610.5h532M1181 773.5h532" />
      <path d="M1496.5 235v627" strokeWidth="1.2" />
      <path d="M1197 240.5h288" stroke="#0d8482" strokeWidth="1.5" />
      <path d="M1197 240v7.5h516M1197 244.5h293M1486.500 235v6M1488.500 235v8M1492.500 235v10.500h221" />
      <path d="M1197 777.5h516M1197 777v7.500M1197 782.500h516M1197 784.500h516" strokeWidth="1" />
    </g>
    {[1206.5, 1279.5, 1388.5, 1496.5, 1605.5, 1710].map(x => <g key={x}><IBeam x={x} y={252} /><IBeam x={x} y={773} /></g>)}
    {[384.5, 512.5, 640.5].map(y => <HBeam key={y} x={1206.5} y={y} />)}
    <g fill="none" stroke="#845424">
      <path d="M1564.5 237v601M1181 420.5h532M1181 506.5h532M1181 680.5h532" />
      <path d="M1650.5 237v601" stroke="#b0681c" /><path d="M1181 593.5h532" stroke="#e08212" />
    </g>
    {PIPES.map((x, i) => <path key={x} d={`M${x} 281v457`} stroke={['#ff5cf5', '#f789f2', '#ca5fc8', '#f264ec', '#e463e0', '#ca4fc8'][i]} strokeWidth={i === 2 ? 1.5 : 1} />)}
    <path d="M1211 758.5h502" stroke="#ff5cf5" /><path d="M1255 738v20" stroke="#c850c6" strokeWidth="1.4" />
    <path d="M1520.5 282v-18h87v18M1528 263l-6 1.500 6 1.500M1600 263l6 1.500-6 1.500" stroke="#1a1ac4" fill="none" />
    <text x="1564" y="262.500" fontSize="10" textAnchor="middle" fontWeight="700" fill="#0000c8">3000</text>
    <text x="1698" y="254" fontSize="5" textAnchor="middle" fill="#a0a0a0" textLength="25" lengthAdjust="spacingAndGlyphs">20mm slab edge</text>
    {TAGS.map(([ys, ns], c) => ns.map((n, i) => <Tag key={n} x={PIPES[c] + 26.5} y={ys[i]} n={n} from={[PIPES[c], ys[i] - 26]} />))}
    {[773, 758, 759, 760, 761, 762].map((n, i) => <Tag key={n} x={1236.7 + i * 86.6} y={784.6} n={n} from={[1210.700 + i * 86.6, 758.500]} />)}
    <Tag x={1281.500} y={815.500} n={280} from={[1255, 758]} />
    {PIPES.map((x, i) => (i < 2 ? LY_A : LY_B).map(y => <Size key={x + '-' + y} x={x - 3} y={y} />))}
    {[1229, 1252, 1277, 1341, 1427.5, 1514, 1600, 1687].map(x => <Size key={x} x={x} y={756} flat />)}
    <Size x={1252} y={748} />
    <rect x="1182" y="823" width="39" height="39" fill="#fff" />
    <g fill="none" stroke="#111" strokeWidth="3">
      <rect x="-9" y="-4" width="16" height="8" rx="4" transform="translate(1193 834) rotate(52)" />
      <rect x="-8" y="-4" width="16" height="8" rx="4" transform="translate(1201 843) rotate(52)" />
      <rect x="-7" y="-4" width="16" height="8" rx="4" transform="translate(1209 851) rotate(52)" />
    </g>
    <text x="1178.500" y="881" fontSize="25" fontWeight="700" textLength="64" lengthAdjust="spacingAndGlyphs">TEST</text>
    <path d="M1080 887.5h275" stroke="#555" />
    <text x="1097" y="913" fontSize="25" fontWeight="700" textLength="227">3.175 mm = 1 Foot</text>
  </Svg>
);

/* ---------- picker content ---------- */
const OPTIONS = [['Anvil', 26], ['Argco', 6], ['Generic', 11], ['Reliable', 10], ['Shurjoint', 12], ['Titus', 10], ['Tyco', 12], ['Victaulic', 32]];
const PARTS = [
  ['Fig. 7000, Flexible\nCoupling, Lightweight,\nGalv, E Gasket', 'Import/Domestic', 'Flexible Coupling', 'Galvanized'],
  ['Fig. 7000, Flexible\nCoupling, Lightweight,\nGalv, Flush Gap, E Gasket', 'Import/Domestic', 'Flexible Coupling', 'Galvanized'],
  ['Fig. 7000, Flexible\nCoupling, Lightweight, Org\nPnt, E Gasket', 'Import/Domestic', 'Flexible Coupling', 'Orange Paint'],
  ['Fig. 7000, Flexible\nCoupling, Lightweight, Org\nPnt, Flush Gap, E Gasket', 'Import/Domestic', 'Flexible Coupling', 'Orange Paint'],
  ['Fig. 7010, Rigid Coupling,\nReducing, Galv, E Gasket', 'Domestic', 'Rigid Coupling', 'Galvanized'],
  ['Fig. 7010, Rigid Coupling,\nReducing, Org Pnt, E\nGasket', 'Domestic', 'Rigid Coupling', 'Orange Paint'],
];
const CATS = ['New Parts', 'Couplings', 'Fittings', 'Hanger Parts', 'Hardware', 'Nozzles', 'Pipe', 'Pipe Outlets', 'Sprinklers', 'Sway Bracing', 'Trim', 'Valves', 'FDCs', 'Flexible Sprinkler Hoses & Accessories'];

const Chev = ({ d, w = 11, h = 7, c = '#000', sw = 2 }) => (
  <Svg width={w} height={h} viewBox={`0 0 ${w} ${h}`}><path d={d} fill="none" stroke={c} strokeWidth={sw} /></Svg>
);
const PageArrow = ({ w, d, c }) => <PageNo $w={w}><Chev w={11} h={13} d={d} c={c} sw={1.7} /></PageNo>;
const Select = () => <SelectBox>All<Chev w={14} h={9} d="M1 1l6 6 6-6" sw={2.2} /></SelectBox>;
const FilterGroup = ({ name, open, mt }) => <Group $mt={mt}><span>{name}</span><span>{open ? '−' : '+'}</span></Group>;

const Picker = () => (
  <PickerPane>
    <PaneTitle>
      Parts Picker<Spacer />
      <Svg width="9" height="10" viewBox="0 0 9 10"><path d="M2.500 0v6M2 .500h5M6.500 0v6M0 6.500h9M4.500 7v3" stroke="#444" fill="none" /></Svg>
      <Svg width="9" height="9" viewBox="0 0 9 9"><path d="M1 1l7 7M8 1L1 8" stroke="#444" strokeWidth="1.500" /></Svg>
    </PaneTitle>
    <Web>
      <TopActions>
        <Blue $w={127} $h={32} $fs={22}>Download</Blue><Bars />
        <Blue $w={100} $h={32} $fs={22}>Profiles</Blue><Bars />
        <Blue $w={98} $h={32} $fs={18.500} $ml="auto">Support</Blue>
      </TopActions>
      <Tabs>{CATS.map((c, i) => <Tab key={c} $on={i < 2} $active={i === 1}>{c}</Tab>)}</Tabs>
      <Panel>
        <Filters>
          <FilterHead>Filters<Blue $w={45} $h={19} $fs={13.500}>Reset</Blue></FilterHead>
          <Field $w={194} $lh={31}>Search by Text</Field>
          <ListWrap>
            <List>
              <FilterGroup name="REGION" mt={-1} /><FilterGroup name="ORIGIN" /><FilterGroup name="MANUFACTURER" open />
              <Opt $first><Check><Chev w={9} h={9} d="M1 4l3 3 4-6" /></Check>All</Opt>
              {OPTIONS.map(([n, c]) => <Opt key={n}><Check />{n}<Count>{c}</Count></Opt>)}
              <FilterGroup name="SUBTYPE" mt={3} /><FilterGroup name="FINISH" /><FilterGroup name="SUBCATEGORY" />
            </List>
            <Scroll>
              <Svg width="13" height="26" viewBox="0 0 13 26"><path d="M1.500 25l5-6 5 6" fill="none" stroke="#555" strokeWidth="2.400" /></Svg>
              <Thumb />
              <Svg width="13" height="60" viewBox="0 0 13 60"><path d="M1.500 45l5 6 5-6" fill="none" stroke="#555" strokeWidth="2.400" /></Svg>
            </Scroll>
          </ListWrap>
          <Links>
            <Opt $c="#3f9bf0" $fs={13}><Check />Metric Display</Opt>
            <Opt $c="#3f9bf0" $fs={13}><Check />Use Staging</Opt>
          </Links>
        </Filters>
        <Card>
          <Summary>
            <Field $w={58} $c="#333" $lh={31}>30</Field><PerPage>results per page</PerPage>
            <Totals>1 - 30 of 119 parts<br />0 parts selected</Totals>
          </Summary>
          <Pager>
            <PageArrow w={28} d="M5.500 1L1 6.500l4.500 5.500M10 1L5.500 6.500 10 12" c="#496087" />
            <PageArrow w={29} d="M8 1L3 6.500 8 12" c="#496087" />
            <PageNo $c="#3f9bf8">1</PageNo><PageNo>2</PageNo><PageNo>3</PageNo><PageNo>4</PageNo>
            <PageArrow w={25} d="M3 1l5 5.500L3 12" c="#8ab8ee" />
            <PageArrow w={32} d="M1 1l4.500 5.500L1 12M5.500 1L10 6.500 5.500 12" c="#8ab8ee" />
          </Pager>
          <THead>
            <BigCheck />
            <TH><THLabel>Description</THLabel><Field $w={131}>Search</Field></TH>
            <TH $on><THLabel>Manufacturer<Svg width="9" height="6" viewBox="0 0 9 6"><path d="M0 1h9L4.500 5.500z" fill="#fff" /></Svg></THLabel><Select /></TH>
            <TH><THLabel>Origin</THLabel><Select /></TH>
            <TH><THLabel>Subtype</THLabel><Field $w={85}>Search</Field></TH>
            <TH><THLabel>Subcategory</THLabel><Field $w={85}>Search</Field></TH>
            <TH><THLabel>Finish</THLabel><Field $w={85}>Search</Field></TH>
          </THead>
          {PARTS.map(([d, o, s, f]) => (
            <TR key={d} $lines={d.split('\n').length}>
              <Check /><Desc>{d}</Desc><b>Anvil</b><span>{o}</span><span>Standard</span><span>{s}</span><span>{f}</span><Info />
            </TR>
          ))}
        </Card>
      </Panel>
    </Web>
    <BottomTabs>
      {[['Details', 48], ['Design', 49], ['Textures', 57], ['News', 42], ['Training', 56], ['Fab Cloud', 67], ['Parts Picker', 68, 1], ['Alerts', 43], ['Symbols', 57], ['Select', 40]].map(([t, w, a]) => <BTab key={t} $w={w} $active={a}>{t}</BTab>)}
    </BottomTabs>
  </PickerPane>
);

const SHEETS = [['*Model', 60], ['N°_DESSIN', 83], ['Visa700_PLAN', 97], ['Visa700_ISO', 89], ['Visa1200_PLAN', 103], ['Visa1200_ISO', 95], ['A3_Paysage', 86]];
const NAV = ['M1 1v8M8 1v8L3 5z', 'M7 1v8L3 5z', 'M3 1v8l4-4z', 'M2 1v8l5-4zM9 1v8'];

const Doc = () => (
  <DocPane>
    <DocTabs>
      <DocTab $w={63}>Start Page</DocTab>
      <DocTab $w={156} $active>VEDIA-VIA-BAT-N_03.cad<Svg width="8" height="18" viewBox="0 0 8 18"><path d="M.500 6l7 7M7.500 6l-7 7" stroke="#333" /></Svg></DocTab>
      <DocTab $w={63}>Drawing2</DocTab><DocTab $w={60}>Drawing3</DocTab>
      <Spacer />
      <Svg width="40" height="20" viewBox="0 0 40 20"><path d="M14 5v8l-4-4zM28 5v8l4-4z" stroke="#3c3c3c" fill="none" /></Svg>
    </DocTabs>
    <DocBody>
      <CanvasRow><Drawing /><VScroll><i /></VScroll></CanvasRow>
      <HScroll><i /></HScroll>
      <Sheets>
        {NAV.map(d => <NavBtn key={d}><Svg width="10" height="10" viewBox="0 0 10 10"><path d={d} fill="#555" stroke="#555" strokeWidth="1" /></Svg></NavBtn>)}
        <SheetList>
          {SHEETS.map(([t, w], i) => <Sheet key={t} $w={w} $first={i === 0} $last={i === 6}>{t}</Sheet>)}
          <Sheet $active $w={64}>*Sheet 7</Sheet>
        </SheetList>
      </Sheets>
    </DocBody>
  </DocPane>
);

const SideTools = () => (
  <Side>
    <VBar $h={233}><VGrip /><VText $h={72}>Import DWG</VText>{['dwg', 'compare', 'blocks'].map(n => <VSlot key={n}><Icon name={n} size={30} /></VSlot>)}<VMark /></VBar>
    <VBar $h={342}><VGrip />
      {['sideA', 'sideB', 0, 'sideC', 'sideD', 0, 'sideE', 'sideF', 'sideG'].map((n, i) => (n ? <VSlot key={i} $h={42}><Icon name={n} /></VSlot> : <VLine key={i} />))}
      <VMark />
    </VBar>
    <VBar $h={178}><VGrip /><VText $h={38}>GLSL</VText><VHot>OpenGL®</VHot><VSlot><Icon name="monitor" /></VSlot><VMark /></VBar>
  </Side>
);

export default function App() {
  return (
    <Frame>
      <Global />
      <TitleBar>
        <Svg width="16" height="16" viewBox="0 0 16 16"><rect width="16" height="16" rx="1" fill="#39424f" /><path d="M2 13L8 2h3l2 11h-3l-.500-3H6l-2 3z" fill="#2f78dc" stroke="#d5e6f7" strokeWidth=".8" /></Svg>
        <TitleText>AutoSPRINK® 2023 Platinum - C:\Users\B.Chambers\Desktop\AutomationTesting\SmokeTesting\SPRINK Smoke Testing Files\VEDIA-VIA-BAT-N_03.cad - [VEDIA-VIA-BAT-N_03]</TitleText>
        <WinButtons $gap={35}>
          <Svg width="10" height="10" viewBox="0 0 10 10"><path d="M0 5.500h10" stroke="#111" /></Svg>
          <Svg width="10" height="11" viewBox="0 0 10 11"><path d="M.500 3h6.500v7.500H.500zM3 3V.500h6.500V8H7" stroke="#111" fill="none" /></Svg>
          <Svg width="10" height="10" viewBox="0 0 10 10"><path d="M0 0l10 10M10 0L0 10" stroke="#111" /></Svg>
        </WinButtons>
      </TitleBar>
      <MenuBar>
        <Svg width="16" height="16" viewBox="0 0 16 16"><path d="M1 1h12l2 3v11H1z" fill="#fff" stroke="#222" /><path d="M2 2h9v3H2z" fill="#ed0" /><path d="M3 7l5 7H3z" fill="#0b0" /><path d="M11 5l-2 8" stroke="#c0c" strokeWidth="1.500" /></Svg>
        {['File', 'Edit', 'Select', 'Snaps', 'Tools', 'Actions', 'Commands', 'Settings', 'View', 'Window', 'Help'].map((m, i) => <MenuItem key={m} $first={!i}>{m}</MenuItem>)}
        <Spacer />
        <WinButtons $gap={8}>
          <Svg width="8" height="18" viewBox="0 0 8 18"><path d="M0 15h7" stroke="#9da6b3" strokeWidth="2" /></Svg>
          <Svg width="9" height="18" viewBox="0 0 9 18"><path d="M.500 9.500h6v5h-6zM2.500 9V7h6v5H7" stroke="#9da6b3" fill="none" /></Svg>
          <Svg width="8" height="18" viewBox="0 0 8 18"><path d="M.500 7.500l7 8M7.500 7.500l-7 8" stroke="#9da6b3" strokeWidth="1.800" /></Svg>
        </WinButtons>
      </MenuBar>
      {[row1, row2, row3].map((r, i) => <Row key={i}>{r.map((b, j) => <ToolBar key={j} {...b} />)}</Row>)}
      <Main><Picker /><Doc /><SideTools /></Main>
      <Status>
        Ready<Spacer />
        <Cell $w={59}>0 selected</Cell><Cell $w={58} $ml={5}>Elev1: 0 "</Cell>
        <Cell $w={63}>ø 2 (2.0670)</Cell><Cell $w={33}># Off</Cell><Cell $w={27}>Inch</Cell>
      </Status>
      <Row>{bottomRow.map((b, j) => <ToolBar key={j} {...b} />)}</Row>
    </Frame>
  );
}
